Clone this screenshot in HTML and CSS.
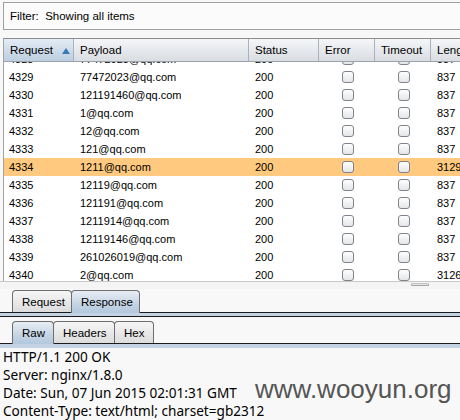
FILE: index.html
```html
<!DOCTYPE html>
<html>
<head>
<meta charset="utf-8">
<link rel="stylesheet" href="styles.css">
</head>
<body>
<div class="page">
  <div class="filter">Filter:&nbsp; Showing all items</div>

  <div class="table">
    <div class="head">
      <div class="hc sorted">Request<span class="arrow"></span></div>
      <div class="hc">Payload</div>
      <div class="hc">Status</div>
      <div class="hc">Error</div>
      <div class="hc">Timeout</div>
      <div class="hc">Length</div>
    </div>
    <div class="viewport">
      <div class="rows">
        <div class="row"><span>4328</span><span>77472023@qq.com</span><span>200</span><span class="cb"><i></i></span><span class="cb"><i></i></span><span>837</span></div>
        <div class="row"><span>4329</span><span>77472023@qq.com</span><span>200</span><span class="cb"><i></i></span><span class="cb"><i></i></span><span>837</span></div>
        <div class="row"><span>4330</span><span>121191460@qq.com</span><span>200</span><span class="cb"><i></i></span><span class="cb"><i></i></span><span>837</span></div>
        <div class="row"><span>4331</span><span>1@qq.com</span><span>200</span><span class="cb"><i></i></span><span class="cb"><i></i></span><span>837</span></div>
        <div class="row"><span>4332</span><span>12@qq.com</span><span>200</span><span class="cb"><i></i></span><span class="cb"><i></i></span><span>837</span></div>
        <div class="row"><span>4333</span><span>121@qq.com</span><span>200</span><span class="cb"><i></i></span><span class="cb"><i></i></span><span>837</span></div>
        <div class="row hl"><span>4334</span><span>1211@qq.com</span><span>200</span><span class="cb"><i></i></span><span class="cb"><i></i></span><span>3129</span></div>
        <div class="row"><span>4335</span><span>12119@qq.com</span><span>200</span><span class="cb"><i></i></span><span class="cb"><i></i></span><span>837</span></div>
        <div class="row"><span>4336</span><span>121191@qq.com</span><span>200</span><span class="cb"><i></i></span><span class="cb"><i></i></span><span>837</span></div>
        <div class="row"><span>4337</span><span>1211914@qq.com</span><span>200</span><span class="cb"><i></i></span><span class="cb"><i></i></span><span>837</span></div>
        <div class="row"><span>4338</span><span>12119146@qq.com</span><span>200</span><span class="cb"><i></i></span><span class="cb"><i></i></span><span>837</span></div>
        <div class="row"><span>4339</span><span>261026019@qq.com</span><span>200</span><span class="cb"><i></i></span><span class="cb"><i></i></span><span>837</span></div>
        <div class="row"><span>4340</span><span>2@qq.com</span><span>200</span><span class="cb"><i></i></span><span class="cb"><i></i></span><span>3126</span></div>
      </div>
    </div>
  </div>
  <div class="splitter"><span class="grip"></span></div>

  <div class="tabs">
    <div class="tab">Request</div>
    <div class="tab sel">Response</div>
  </div>
  <div class="band band1"></div>

  <div class="tabs tabs2">
    <div class="tab sel">Raw</div>
    <div class="tab">Headers</div>
    <div class="tab">Hex</div>
  </div>
  <div class="band band2"></div>

  <div class="resp">
    <div>HTTP/1.1 200 OK</div>
    <div>Server: nginx/1.8.0</div>
    <div>Date: Sun, 07 Jun 2015 02:01:31 GMT</div>
    <div>Content-Type: text/html; charset=gb2312</div>
  </div>
  <div class="watermark">www.wooyun.org</div>
</div>
</body>
</html>
```

FILE: styles.css
```css
* { box-sizing: border-box; }
html, body { margin: 0; padding: 0; }
body {
  width: 460px;
  height: 420px;
  overflow: hidden;
  background: #f8f8f8;
  font-family: "Liberation Sans", Arial, sans-serif;
  font-size: 11px;
  color: #000;
}
.page { position: relative; width: 460px; height: 420px; overflow: hidden; }

.filter {
  margin: 2px 0 0 3px;
  height: 28px;
  border: 1px solid #a0a0a0;
  border-right: none;
  background: #fbfbfb;
  padding-left: 6px;
  line-height: 26px;
  font-size: 11.5px;
}

.table {
  margin: 8px 0 0 3px;
  border-left: 1px solid #a3a3a3;
  border-top: 1px solid #8d8d8d;
  width: 500px;
}
.head {
  display: grid;
  grid-template-columns: 70px 175px 70px 56px 56px 90px;
  height: 23px;
  border-bottom: 1px solid #9aa3ad;
}
.hc {
  position: relative;
  padding-left: 6px;
  line-height: 22px;
  font-size: 11.5px;
  border-right: 1px solid #aab2bb;
  background: linear-gradient(#f5f6f8, #e6e9ed 50%, #d9dde2);
}
.hc.sorted {
  background: linear-gradient(#e4edf6, #cfdcea 50%, #bccfe1);
}
.arrow {
  position: absolute;
  left: 58px;
  top: 9px;
  width: 0;
  height: 0;
  border-left: 4px solid transparent;
  border-right: 4px solid transparent;
  border-bottom: 6px solid #3b79b7;
}

.viewport {
  height: 219px;
  overflow: hidden;
  background: #fff;
}
.rows { margin-top: -12px; }
.row {
  display: grid;
  grid-template-columns: 70px 175px 70px 56px 56px 90px;
  height: 18px;
  line-height: 18px;
}
.row > span { padding-left: 6px; white-space: nowrap; }
.row > span:first-child { padding-left: 5px; }
.row.hl { background: #ffc97f; }
.row .cb {
  display: flex;
  align-items: center;
  justify-content: center;
  padding-left: 2px;
}
.cb i {
  display: block;
  width: 12px;
  height: 12px;
  border: 1px solid #7f8389;
  border-radius: 3px;
  background: linear-gradient(#fdfdfd, #e4e6e9);
}

.splitter {
  height: 8px;
  border-top: 1px solid #c9c9c9;
  background: #f4f4f4;
  position: relative;
}
.grip {
  position: absolute;
  left: 411px;
  top: 1px;
  width: 18px;
  height: 3px;
  border: 1px solid #a8a8a8;
  border-top-color: #c4c4c4;
  border-radius: 2px;
  background: #e2e2e2;
}

.tabs {
  display: flex;
  align-items: flex-end;
  padding-left: 12px;
  height: 23px;
}
.tabs2 { margin-top: 3px; }
.tab {
  height: 22px;
  padding: 0 9px;
  line-height: 22px;
  font-size: 11.5px;
  border: 1px solid #6e6e6e;
  border-bottom: none;
  border-radius: 4px 4px 0 0;
  background: linear-gradient(#f6f6f6, #dcdcdc);
  margin-right: -1px;
}
.tab.sel {
  height: 23px;
  position: relative;
  z-index: 1;
  margin-bottom: -1px;
  background: linear-gradient(#e8eef4, #c4d4e4 60%, #b3c8dd);
}
.tabs .tab:nth-child(1) { width: 60px; }
.tabs .tab:nth-child(2) { width: 69px; }
.tabs2 .tab:nth-child(1) { width: 42px; }
.tabs2 .tab:nth-child(2) { width: 62px; }
.tabs2 .tab:nth-child(3) { width: 40px; }

.band {
  border-top: 1px solid #1c1c1c;
  background: #c3d3e4;
}
.band1 { height: 5px; border-bottom: 1px solid #1c1c1c; }
.band2 { height: 5px; }

.resp {
  padding-left: 3px;
  font-family: "Noto Sans", "Open Sans", sans-serif;
  font-size: 13.6px;
  line-height: 18px;
  color: #000;
}
.watermark {
  position: absolute;
  left: 255px;
  top: 374px;
  font-family: "Liberation Sans", Arial, sans-serif;
  font-size: 26px;
  color: #555;
  white-space: nowrap;
}
```
